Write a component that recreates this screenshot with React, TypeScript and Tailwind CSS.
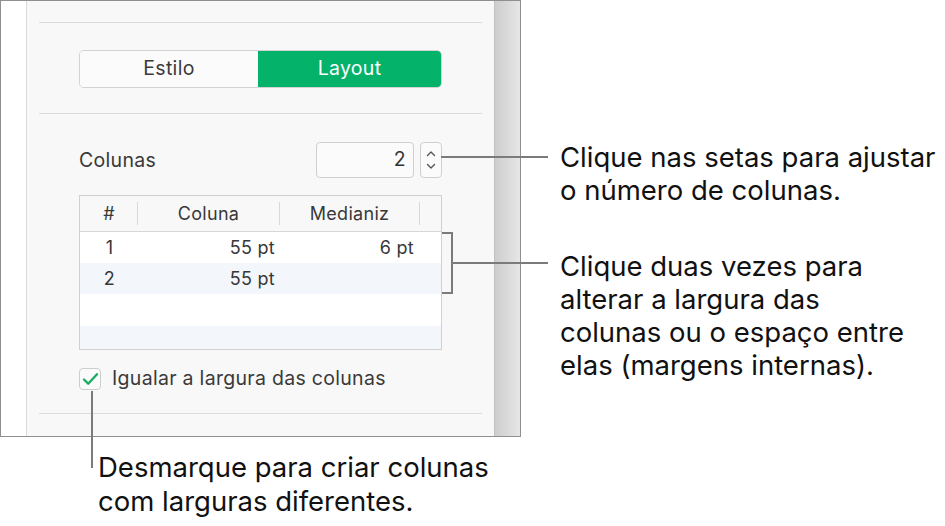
import React from 'react';

const Chevron = ({ up }: { up?: boolean }) => (
  <svg width="10" height="7" viewBox="0 0 10 7" fill="none">
    <path
      d={up ? 'M1.5 5.5L5 2l3.5 3.5' : 'M1.5 1.5L5 5l3.5-3.5'}
      stroke="#555"
      strokeWidth="1.4"
      strokeLinecap="round"
      strokeLinejoin="round"
    />
  </svg>
);

const Divider = () => <div className="h-px bg-[#dcdcdc]" />;

const rows = [
  { n: '1', col: '55 pt', gut: '6 pt', bg: 'bg-white', h: 'h-[31px]' },
  { n: '2', col: '55 pt', gut: '', bg: 'bg-[#f3f6fb]', h: 'h-[31px]' },
  { n: '', col: '', gut: '', bg: 'bg-white', h: 'h-[32px]' },
  { n: '', col: '', gut: '', bg: 'bg-[#f3f6fb]', h: 'h-[23px]' },
];

export default function App() {
  return (
    <div className="relative w-[945px] h-[526px] bg-white font-['Inter',sans-serif] text-[#111] overflow-hidden">
      <div className="flex">
        {/* inspector panel */}
        <div className="w-[521px] h-[437px] border border-[#8f8f8f] flex shrink-0">
          <div className="w-[26px] bg-white border-r border-[#dadada]" />
          <div className="flex-1 bg-[#f8f8f8] px-[12px] pt-[21px] tracking-[0.3px]">
            <Divider />
            <div className="px-[40px] pt-[27px] pb-[25px]">
              <div className="flex h-[38px] rounded-[5px] overflow-hidden border border-[#d2d2d2] text-[19.5px]">
                <div className="w-[178px] flex items-center justify-center bg-[#fbfbfb] text-[#3a3a3a]">Estilo</div>
                <div className="flex-1 flex items-center justify-center bg-[#04b26a] text-white">Layout</div>
              </div>
            </div>
            <Divider />
            <div className="px-[40px] pt-[27px]">
              <div className="flex items-center h-[37px]">
                <span className="flex-1 text-[19.5px] text-[#383838] pt-[3px]">Colunas</span>
                <div className="w-[98px] h-[36px] rounded-[4px] border border-[#cfcfcf] bg-[#fbfbfb] flex items-center justify-end pr-[7px] text-[19.5px] text-[#333]">2</div>
                <div className="ml-[6px] w-[22px] h-[36px] rounded-[4px] border border-[#cfcfcf] bg-[#fbfbfb] flex flex-col items-center justify-center gap-[6px]">
                  <Chevron up />
                  <Chevron />
                </div>
              </div>
              <div className="mt-[17px] border border-[#d0d0d0] bg-white text-[18px] text-[#383838]">
                <div className="grid grid-cols-[58px_142px_140px_1fr] h-[36px] border-b border-[#d6d6d6] bg-[#f8f8f8] items-center">
                  <div className="h-[23px] flex items-center justify-center border-r border-[#d8d8d8] pl-[1px]">#</div>
                  <div className="h-[23px] flex items-center justify-center border-r border-[#d8d8d8]">Coluna</div>
                  <div className="h-[23px] flex items-center justify-center border-r border-[#d8d8d8]">Medianiz</div>
                  <div />
                </div>
                {rows.map((r, i) => (
                  <div key={i} className={`grid grid-cols-[58px_142px_140px_1fr] items-center ${r.bg} ${r.h}`}>
                    <div className="text-center pl-[1px]">{r.n}</div>
                    <div className="text-right pr-[5px]">{r.col}</div>
                    <div className="text-right pr-[6px]">{r.gut}</div>
                    <div />
                  </div>
                ))}
              </div>
              <div className="flex items-center mt-[17px] h-[24px]">
                <div className="w-[22px] h-[22px] rounded-[4px] border border-[#cdcdcd] bg-[#fbfbfb] flex items-center justify-center">
                  <svg width="17" height="14" viewBox="0 0 17 14" fill="none">
                    <path d="M2 7.5l4.2 4.2L15 2.2" stroke="#1aae63" strokeWidth="2.4" strokeLinecap="round" strokeLinejoin="round" />
                  </svg>
                </div>
                <span className="ml-[11px] text-[19.5px] text-[#3a3a3a]">Igualar a largura das colunas</span>
              </div>
            </div>
            <div className="mt-[22px]">
              <Divider />
            </div>
          </div>
          <div className="w-[26px] bg-gradient-to-r from-[#cdcdcd] to-[#e6e6e6] border-l border-[#c2c2c2]" />
        </div>

        {/* callout texts */}
        <div className="pl-[39px] pt-[141px] text-[27.5px] leading-[33px] whitespace-nowrap">
          <p>Clique nas setas para ajustar<br />o número de colunas.</p>
          <p className="mt-[43px]">
            Clique duas vezes para<br />alterar a largura das<br />colunas ou o espaço entre<br />elas (margens internas).
          </p>
        </div>
      </div>
      <p className="pl-[98px] pt-[13px] text-[27.5px] leading-[34px]">
        Desmarque para criar colunas<br />com larguras diferentes.
      </p>

      {/* leader lines */}
      <div className="absolute left-[441px] top-[156px] w-[107px] h-[2px] bg-[#7b7b7b]" />
      <div className="absolute left-[442px] top-[232px] w-[11px] h-[62px] border-2 border-l-0 border-[#7b7b7b]" />
      <div className="absolute left-[453px] top-[262px] w-[95px] h-[2px] bg-[#7b7b7b]" />
      <div className="absolute left-[91px] top-[391px] w-[2px] h-[77px] bg-[#7b7b7b]" />
    </div>
  );
}
